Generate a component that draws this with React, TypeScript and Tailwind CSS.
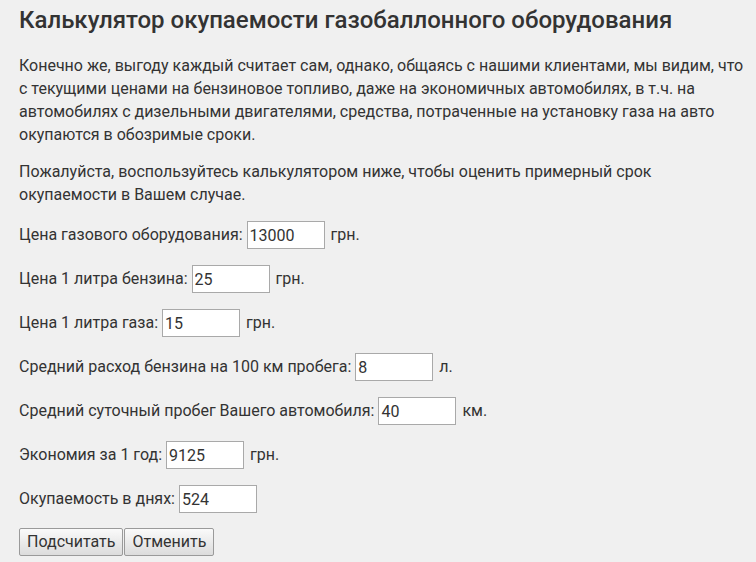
import React from 'react';

const rows = [
  { label: 'Цена газового оборудования:', value: '13000', unit: 'грн.' },
  { label: 'Цена 1 литра бензина:', value: '25', unit: 'грн.' },
  { label: 'Цена 1 литра газа:', value: '15', unit: 'грн.' },
  { label: 'Средний расход бензина на 100 км пробега:', value: '8', unit: 'л.' },
  { label: 'Средний суточный пробег Вашего автомобиля:', value: '40', unit: 'км.' },
  { label: 'Экономия за 1 год:', value: '9125', unit: 'грн.' },
  { label: 'Окупаемость в днях:', value: '524', unit: '' },
];

export default function App() {
  return (
    <div
      className="min-h-[562px] bg-[#f0f0f0] pl-[19px] pr-[4px] pt-[5px] text-[16px] text-[#333]"
      style={{ fontFamily: 'Roboto, "Liberation Sans", sans-serif' }}
    >
      <h1 className="text-[24px] font-medium leading-[30px] text-[#333]">
        Калькулятор окупаемости газобаллонного оборудования
      </h1>

      <p className="mt-[19px] leading-[23px]">
        Конечно же, выгоду каждый считает сам, однако, общаясь с нашими клиентами, мы видим, что
        с текущими ценами на бензиновое топливо, даже на экономичных автомобилях, в т.ч. на
        автомобилях с дизельными двигателями, средства, потраченные на установку газа на авто
        окупаются в обозримые сроки.
      </p>

      <p className="mt-[14px] leading-[23px]">
        Пожалуйста, воспользуйтесь калькулятором ниже, чтобы оценить примерный срок
        окупаемости в Вашем случае.
      </p>

      <div className="mt-[15px] flex flex-col gap-[16px]">
        {rows.map((r) => (
          <div key={r.label} className="flex h-[28px] items-center">
            <span>{r.label}</span>
            <input
              defaultValue={r.value}
              className="ml-[4px] h-[28px] w-[78px] border border-[#a9a9a9] bg-white px-[2px] text-[16px] text-[#333] outline-none"
            />
            {r.unit && <span className="ml-[6px]">{r.unit}</span>}
          </div>
        ))}
      </div>

      <div className="mt-[15px] flex gap-[1px]">
        <button className="h-[28px] rounded-[2px] border border-[#9a9a9a] bg-gradient-to-b from-[#fafafa] to-[#dcdcdc] px-[7px] text-[16px] text-[#333]">
          Подсчитать
        </button>
        <button className="h-[28px] rounded-[2px] border border-[#9a9a9a] bg-gradient-to-b from-[#fafafa] to-[#dcdcdc] px-[7px] text-[16px] text-[#333]">
          Отменить
        </button>
      </div>
    </div>
  );
}
